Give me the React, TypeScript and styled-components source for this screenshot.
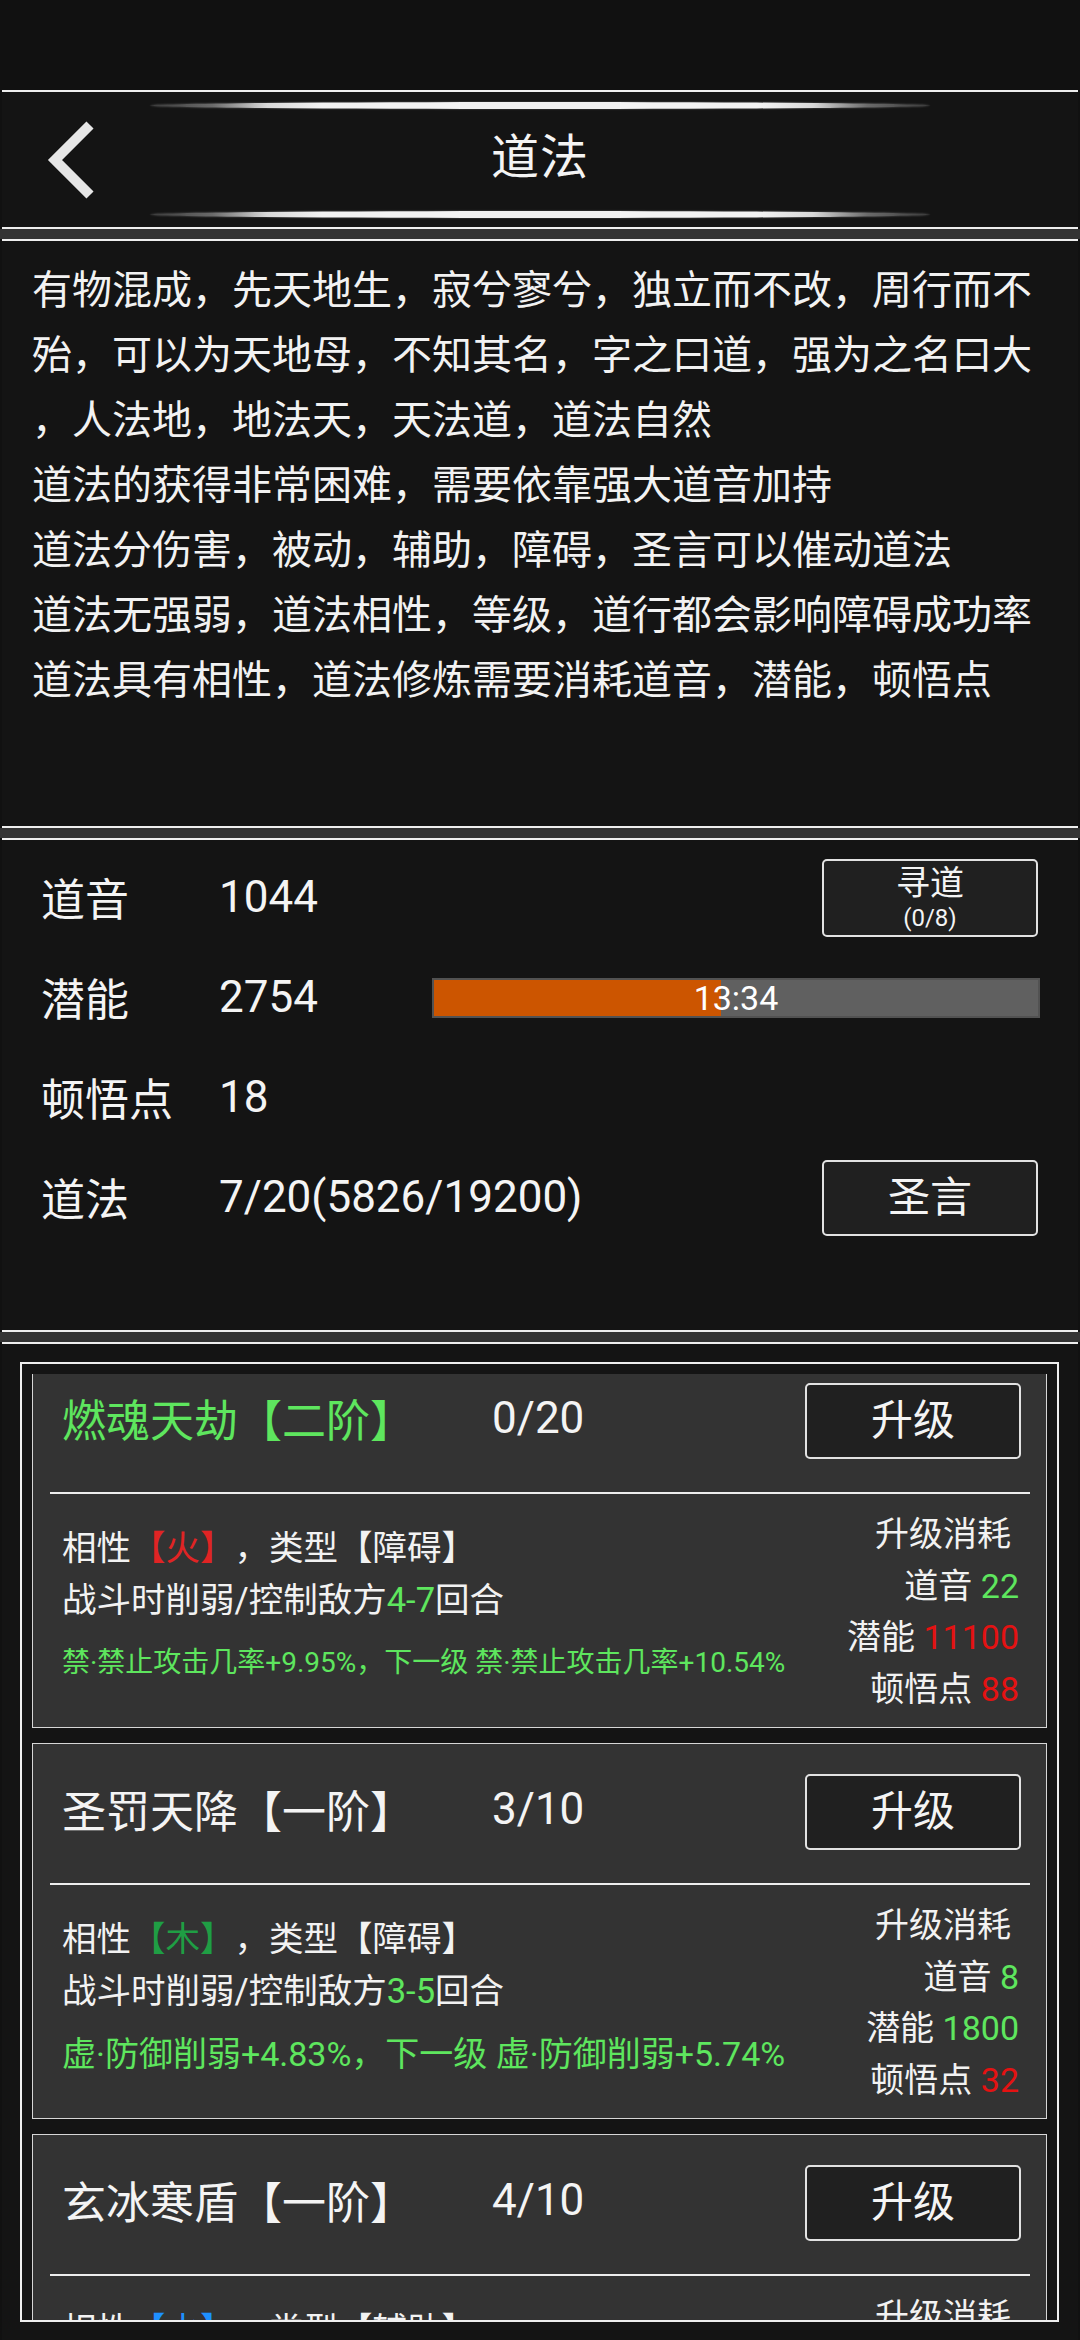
import React from "react";
import styled, { createGlobalStyle } from "styled-components";

const GlobalStyle = createGlobalStyle`
  html, body { margin: 0; padding: 0; background: #111111; }
  body {
    font-family: Roboto, "Noto Sans CJK SC", sans-serif;
    color: #f2f2f2;
    text-spacing-trim: space-all;
    font-feature-settings: "chws" 0, "halt" 0, "palt" 0;
  }
  * { box-sizing: border-box; }
`;

const Page = styled.div`
  width: 1080px;
  height: 2340px;
  overflow: hidden;
  background: #111111;
  display: flex;
  flex-direction: column;
`;

const StatusBar = styled.div`
  flex: none;
  height: 90px;
  background: #111111;
`;

const Panel = styled.section<{ $h?: number }>`
  flex: ${(p) => (p.$h ? "none" : "1 1 auto")};
  height: ${(p) => (p.$h ? `${p.$h}px` : "auto")};
  margin: 0 2px;
  background: #141414;
  border-top: 2px solid #eeeeee;
  border-bottom: ${(p) => (p.$h ? "2px solid #eeeeee" : "none")};
  min-height: 0;
`;

const Strip = styled.div`
  flex: none;
  height: 10px;
  background: #333333;
`;

/* ---------- header ---------- */

const HeaderInner = styled.div`
  height: 100%;
  display: flex;
  flex-direction: column;
  padding: 10px 0 9px;
`;

const Glow = styled.div`
  flex: none;
  align-self: center;
  width: 780px;
  height: 7px;
  border-radius: 50%;
  background: linear-gradient(
    90deg,
    #3a3a3a 0%,
    #6a6a6a 8%,
    #d8d8d8 15%,
    #f2f2f2 22%,
    #f2f2f2 78%,
    #d8d8d8 85%,
    #6a6a6a 92%,
    #3a3a3a 100%
  );
  box-shadow: 0 0 2px rgba(255, 255, 255, 0.35);
`;

const TitleRow = styled.div`
  flex: 1;
  display: grid;
  grid-template-columns: 1fr auto 1fr;
  align-items: center;
`;

const BackButton = styled.div`
  justify-self: start;
  padding-left: 42px;
  display: flex;
  align-items: center;
`;

const Title = styled.h1`
  margin: 0;
  padding-bottom: 5px;
  font-size: 48px;
  font-weight: 400;
  line-height: 1;
  color: #f4f4f4;
  letter-spacing: 1px;
`;

/* ---------- intro text ---------- */

const IntroText = styled.div`
  padding: 17px 0 0 30px;
  font-size: 40px;
  line-height: 65px;
  color: #f2f2f2;
`;

const IntroLine = styled.div`
  white-space: nowrap;
`;

/* ---------- stats ---------- */

const Stats = styled.div`
  padding: 8px 38px 0 39px;
  display: flex;
  flex-direction: column;
`;

const StatRow = styled.div`
  height: 100px;
  display: flex;
  align-items: center;
  font-size: 44px;
  color: #f4f4f4;
`;

const StatLabel = styled.div`
  flex: none;
  width: 178px;
  padding-bottom: 3px;
  white-space: nowrap;
`;

const StatValue = styled.div<{ $w?: number }>`
  flex: ${(p) => (p.$w ? "none" : "1 1 auto")};
  width: ${(p) => (p.$w ? `${p.$w}px` : "auto")};
  padding-bottom: 3px;
  white-space: nowrap;
`;

const FrameButton = styled.button<{ $h: number; $size: number }>`
  flex: none;
  width: 216px;
  height: ${(p) => p.$h}px;
  margin-right: 2px;
  padding: 0;
  background: #202020;
  border: 2px solid #e2e2e2;
  border-radius: 5px;
  color: #f4f4f4;
  font-family: inherit;
  font-size: ${(p) => p.$size}px;
  line-height: 1;
  display: flex;
  flex-direction: column;
  align-items: center;
  justify-content: center;
`;

const BtnMain = styled.span`
  font-size: 34px;
  line-height: 36px;
`;

const BtnSub = styled.span`
  font-size: 24px;
  line-height: 26px;
  margin-top: 4px;
`;

const Bar = styled.div`
  position: relative;
  flex: none;
  width: 608px;
  height: 40px;
  background: #606060;
  border: 2px solid #525252;
`;

const BarFill = styled.div`
  height: 100%;
  background: #cc5500;
`;

const BarText = styled.span`
  position: absolute;
  inset: 0;
  display: flex;
  align-items: center;
  justify-content: center;
  font-size: 34px;
  color: #ffffff;
`;

/* ---------- skill list ---------- */

const ListPanelInner = styled.div`
  height: 100%;
  padding: 18px 19px 0 18px;
`;

const ListFrame = styled.div`
  height: 960px;
  border: 2px solid #eeeeee;
  padding: 10px 10px 0;
  display: flex;
  flex-direction: column;
`;

const ListViewport = styled.div`
  flex: 1;
  overflow: hidden;
`;

/* list is scrolled by 22px */
const List = styled.div`
  margin-top: -22px;
  display: flex;
  flex-direction: column;
  gap: 15px;
`;

const Card = styled.article`
  flex: none;
  height: 376px;
  background: #333333;
  border: 1px solid #d6d6d6;
`;

const CardHeader = styled.div`
  height: 76px;
  margin: 30px 23px 33px 29px;
  display: flex;
  align-items: center;
`;

const SkillName = styled.div<{ $color: string }>`
  flex: none;
  width: 430px;
  padding-bottom: 6px;
  font-size: 44px;
  color: ${(p) => p.$color};
  white-space: nowrap;
`;

const SkillLevel = styled.div`
  flex: 1;
  padding-bottom: 6px;
  font-size: 44px;
  color: #f4f4f4;
`;

const Divider = styled.div`
  height: 2px;
  margin: 0 16px 0 17px;
  background: #eeeeee;
`;

const CardBody = styled.div`
  display: flex;
  justify-content: space-between;
  align-items: flex-start;
  padding: 15px 27px 0 29px;
`;

const InfoCol = styled.div`
  margin-top: 13px;
  font-size: 34.5px;
  line-height: 52px;
  color: #f2f2f2;
  white-space: nowrap;
`;

const EffectLine = styled.div<{ $size: number }>`
  margin-top: 11px;
  font-size: ${(p) => p.$size}px;
  color: #5ee65e;
`;

const CostCol = styled.div`
  font-size: 34px;
  line-height: 51.5px;
  text-align: right;
  color: #f2f2f2;
  white-space: nowrap;
`;

const CostTitle = styled.div`
  padding-right: 8px;
`;

const Tone = styled.span<{ $c: string }>`
  color: ${(p) => p.$c};
`;

const GREEN = "#5ee65e";
const RED = "#e41212";

type Cost = { v: string; c: string };
type Skill = {
  name: string;
  nameColor: string;
  level: string;
  element: string;
  elementColor: string;
  kind: string;
  turns: string;
  effect: string;
  effectSize: number;
  dao: Cost;
  qian: Cost;
  dun: Cost;
};

const skills: Skill[] = [
  {
    name: "燃魂天劫【二阶】",
    nameColor: "#5ee65e",
    level: "0/20",
    element: "【火】",
    elementColor: "#e02424",
    kind: "【障碍】",
    turns: "4-7",
    effect: "禁·禁止攻击几率+9.95%，下一级 禁·禁止攻击几率+10.54%",
    effectSize: 28,
    dao: { v: "22", c: GREEN },
    qian: { v: "11100", c: RED },
    dun: { v: "88", c: RED },
  },
  {
    name: "圣罚天降【一阶】",
    nameColor: "#f4f4f4",
    level: "3/10",
    element: "【木】",
    elementColor: "#1f9e44",
    kind: "【障碍】",
    turns: "3-5",
    effect: "虚·防御削弱+4.83%，下一级 虚·防御削弱+5.74%",
    effectSize: 34,
    dao: { v: "8", c: GREEN },
    qian: { v: "1800", c: GREEN },
    dun: { v: "32", c: RED },
  },
  {
    name: "玄冰寒盾【一阶】",
    nameColor: "#f4f4f4",
    level: "4/10",
    element: "【水】",
    elementColor: "#1e90ff",
    kind: "【辅助】",
    turns: "2-3",
    effect: "冰·伤害减免+3.20%，下一级 冰·伤害减免+3.86%",
    effectSize: 34,
    dao: { v: "12", c: GREEN },
    qian: { v: "2400", c: GREEN },
    dun: { v: "40", c: RED },
  },
];

const introLines = [
  "有物混成，先天地生，寂兮寥兮，独立而不改，周行而不",
  "殆，可以为天地母，不知其名，字之曰道，强为之名曰大",
  "，人法地，地法天，天法道，道法自然",
  "道法的获得非常困难，需要依靠强大道音加持",
  "道法分伤害，被动，辅助，障碍，圣言可以催动道法",
  "道法无强弱，道法相性，等级，道行都会影响障碍成功率",
  "道法具有相性，道法修炼需要消耗道音，潜能，顿悟点",
];

const ChevronLeft = () => (
  <svg width="52" height="80" viewBox="0 0 52 80" aria-hidden="true">
    <polyline
      points="46,5 11,40 46,75"
      fill="none"
      stroke="#e6e6e6"
      strokeWidth="10"
      strokeLinecap="butt"
      strokeLinejoin="miter"
    />
  </svg>
);

const SkillCard = ({ s }: { s: Skill }) => (
  <Card>
    <CardHeader>
      <SkillName $color={s.nameColor}>{s.name}</SkillName>
      <SkillLevel>{s.level}</SkillLevel>
      <FrameButton $h={76} $size={42}>
        升级
      </FrameButton>
    </CardHeader>
    <Divider />
    <CardBody>
      <InfoCol>
        <div>
          相性<Tone $c={s.elementColor}>{s.element}</Tone>，类型{s.kind}
        </div>
        <div>
          战斗时削弱/控制敌方<Tone $c={GREEN}>{s.turns}</Tone>回合
        </div>
        <EffectLine $size={s.effectSize}>{s.effect}</EffectLine>
      </InfoCol>
      <CostCol>
        <CostTitle>升级消耗</CostTitle>
        <div>
          道音 <Tone $c={s.dao.c}>{s.dao.v}</Tone>
        </div>
        <div>
          潜能 <Tone $c={s.qian.c}>{s.qian.v}</Tone>
        </div>
        <div>
          顿悟点 <Tone $c={s.dun.c}>{s.dun.v}</Tone>
        </div>
      </CostCol>
    </CardBody>
  </Card>
);

export default function App() {
  const progress = 47.5;
  return (
    <Page>
      <GlobalStyle />
      <StatusBar />
      <Panel $h={139}>
        <HeaderInner>
          <Glow />
          <TitleRow>
            <BackButton>
              <ChevronLeft />
            </BackButton>
            <Title>道法</Title>
            <div />
          </TitleRow>
          <Glow />
        </HeaderInner>
      </Panel>
      <Strip />
      <Panel $h={589}>
        <IntroText>
          {introLines.map((l, i) => (
            <IntroLine key={i}>{l}</IntroLine>
          ))}
        </IntroText>
      </Panel>
      <Strip />
      <Panel $h={494}>
        <Stats>
          <StatRow>
            <StatLabel>道音</StatLabel>
            <StatValue>1044</StatValue>
            <FrameButton $h={78} $size={34}>
              <BtnMain>寻道</BtnMain>
              <BtnSub>(0/8)</BtnSub>
            </FrameButton>
          </StatRow>
          <StatRow>
            <StatLabel>潜能</StatLabel>
            <StatValue $w={213}>2754</StatValue>
            <Bar>
              <BarFill style={{ width: `${progress}%` }} />
              <BarText>13:34</BarText>
            </Bar>
          </StatRow>
          <StatRow>
            <StatLabel>顿悟点</StatLabel>
            <StatValue>18</StatValue>
          </StatRow>
          <StatRow>
            <StatLabel>道法</StatLabel>
            <StatValue>7/20(5826/19200)</StatValue>
            <FrameButton $h={76} $size={42}>
              圣言
            </FrameButton>
          </StatRow>
        </Stats>
      </Panel>
      <Strip />
      <Panel>
        <ListPanelInner>
          <ListFrame>
            <ListViewport>
              <List>
                {skills.map((s) => (
                  <SkillCard key={s.name} s={s} />
                ))}
              </List>
            </ListViewport>
          </ListFrame>
        </ListPanelInner>
      </Panel>
    </Page>
  );
}
